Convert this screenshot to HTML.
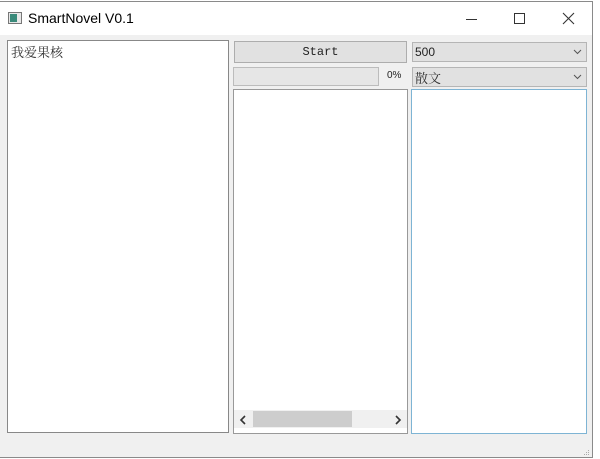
<!DOCTYPE html>
<html><head><meta charset="utf-8"><style>
*{box-sizing:border-box;margin:0;padding:0}
body{width:600px;height:459px;background:#fff;position:relative;overflow:hidden;font-family:"Liberation Sans","Noto Sans CJK SC",sans-serif}
.win{position:absolute;left:0;top:1px;width:593px;height:457px;border:1px solid #8a8a8a;border-left:none;background:#f0f0f0}
.title{position:absolute;left:0;top:0;width:592px;height:33px;background:#fff}
.abs{position:absolute}
.box{position:absolute;background:#fff;border:1px solid #a0a0a0}
.btn{position:absolute;background:#e1e1e1;border:1px solid #adadad}
.cjk{font-family:"Noto Serif CJK SC","Liberation Serif",serif}
</style></head><body>
<div class="win">
 <div class="title">
  <div class="abs" style="left:8px;top:10px;width:14px;height:12px;border:1px solid #777;background:#e8e8e8"></div>
  <div class="abs" style="left:10px;top:12px;width:7px;height:8px;background:#3a8a7a"></div>
  <div class="abs" style="left:28px;top:8px;font-size:14px;color:#000">SmartNovel V0.1</div>
  <div class="abs" style="left:466px;top:17px;width:11px;height:1px;background:#333"></div>
  <div class="abs" style="left:514px;top:11px;width:11px;height:11px;border:1px solid #333"></div>
  <svg class="abs" style="left:562px;top:10px" width="13" height="13"><path d="M1 1L12 12M12 1L1 12" stroke="#333" stroke-width="1.1"/></svg>
 </div>
 <div class="box" style="left:7px;top:38px;width:222px;height:393px;border-color:#888">
  <div class="abs cjk" style="left:3px;top:1px;font-size:13px;color:#333">我爱果核</div>
 </div>
 <div class="btn" style="left:234px;top:39px;width:173px;height:22px"><div style="text-align:center;font:12px 'Liberation Mono',monospace;line-height:20px;color:#222">Start</div></div>
 <div class="abs" style="left:233px;top:65px;width:146px;height:19px;background:#e6e6e6;border:1px solid #bcbcbc"></div>
 <div class="abs" style="left:387px;top:68px;font-size:10px;color:#222">0%</div>
 <div class="box" style="left:233px;top:87px;width:175px;height:345px;border-color:#999">
  <div class="abs" style="left:0;top:320px;width:173px;height:18px;background:#f0f0f0"></div>
  <div class="abs" style="left:19px;top:321px;width:99px;height:16px;background:#cdcdcd"></div>
  <svg class="abs" style="left:5px;top:325px" width="8" height="10"><path d="M6 1L2 5L6 9" stroke="#333" stroke-width="1.6" fill="none"/></svg>
  <svg class="abs" style="left:160px;top:325px" width="8" height="10"><path d="M2 1L6 5L2 9" stroke="#333" stroke-width="1.6" fill="none"/></svg>
 </div>
 <div class="btn" style="left:412px;top:40px;width:175px;height:20px;border-color:#b5b5b5">
  <div class="abs" style="left:2px;top:2px;font-size:12px;color:#222">500</div>
  <svg class="abs" style="left:160px;top:6px" width="9" height="6"><path d="M1 1L4.5 4.5L8 1" stroke="#555" fill="none"/></svg>
 </div>
 <div class="btn" style="left:412px;top:65px;width:175px;height:20px;border-color:#b5b5b5">
  <div class="abs cjk" style="left:2px;top:0px;font-size:13px;color:#333">散文</div>
  <svg class="abs" style="left:160px;top:6px" width="9" height="6"><path d="M1 1L4.5 4.5L8 1" stroke="#555" fill="none"/></svg>
 </div>
 <div class="box" style="left:411px;top:87px;width:176px;height:345px;border-color:#7eb4d4"></div>
 <svg class="abs" style="left:582px;top:448px" width="8" height="7"><g fill="#aaa"><rect x="6" y="0" width="1" height="1"/><rect x="4" y="2" width="1" height="1"/><rect x="6" y="2" width="1" height="1"/><rect x="2" y="4" width="1" height="1"/><rect x="4" y="4" width="1" height="1"/><rect x="6" y="4" width="1" height="1"/></g></svg>
</div>
</body></html>
